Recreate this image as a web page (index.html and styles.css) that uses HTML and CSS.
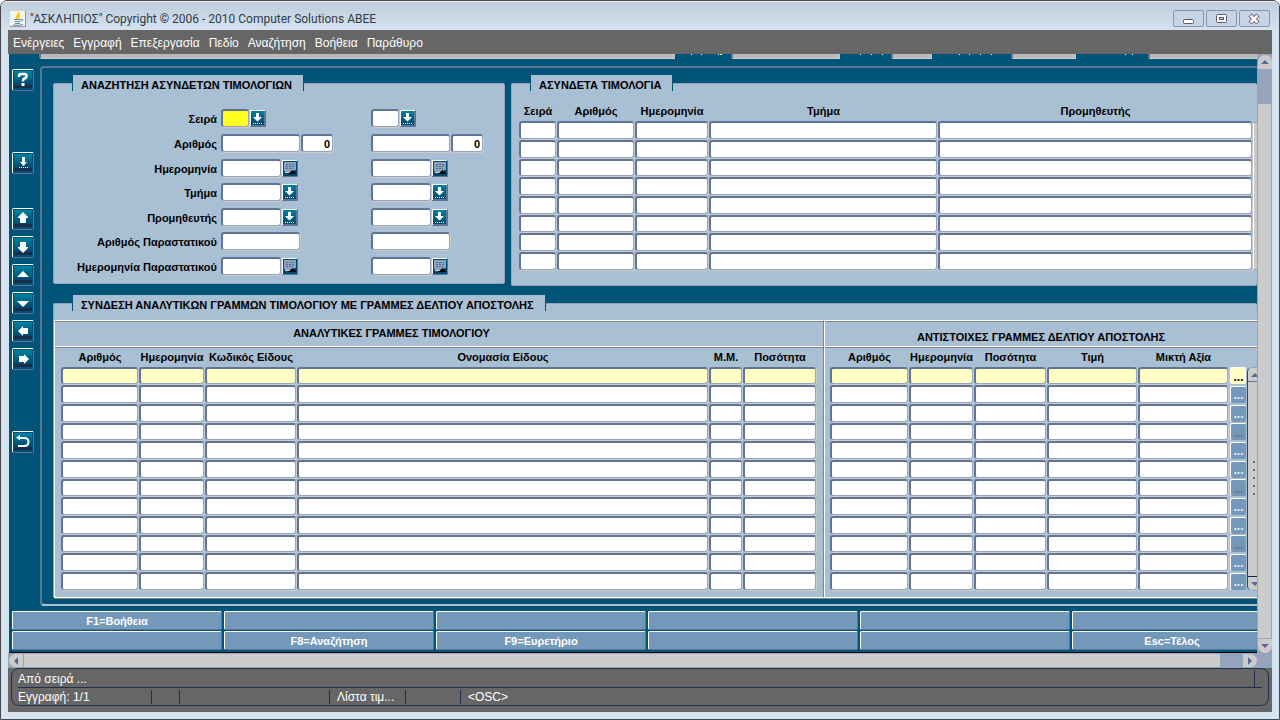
FILE: index.html
```html
<!DOCTYPE html>
<html lang="el">
<head>
<meta charset="utf-8">
<title>"ΑΣΚΛΗΠΙΟΣ"</title>
<link rel="stylesheet" href="styles.css">
</head>
<body>
<svg class="defs" aria-hidden="true">
  <defs>
    <linearGradient id="btn" x1="0" y1="0" x2="0" y2="1"><stop offset="0" stop-color="#0083a3"/><stop offset="1" stop-color="#00466b"/></linearGradient>
    <symbol id="tool" viewBox="0 0 22 22"><rect width="22" height="22" rx="2" fill="#607496"/><path d="M0 21V2Q0 0 2 0H21V1H1V21Z" fill="#fff"/><rect x="1" y="1" width="20" height="20" fill="#004f75"/><rect x="2" y="2" width="18" height="14" fill="url(#btn)"/><rect x="2" y="16" width="18" height="3" fill="#1b2c4a"/></symbol>
    <symbol id="lov" viewBox="0 0 16 17"><rect width="16" height="17" rx="1" fill="#607496"/><path d="M0 16V0H15V1H1V16Z" fill="#fff"/><rect x="1" y="1" width="13" height="14" fill="url(#btn)"/><path d="M6 3H9V7H12L7.500 11.500L3 7H6Z" fill="#fff"/><path d="M3 13.500H12" stroke="#fff" stroke-dasharray="1 1"/></symbol>
    <symbol id="cal" viewBox="0 0 16 17"><rect width="16" height="17" rx="1" fill="#607496"/><path d="M0 16V0H15V1H1V16Z" fill="#fff"/><rect x="1" y="1" width="14" height="15" fill="#004a70"/><path d="M2 2H14V10H12V12H3V11H2Z" fill="#8ba3bf"/><path d="M4 4.500H12M4 6.500H12M4 8.500H11" stroke="#526c92" stroke-dasharray="2 1"/><path d="M3 12.500H8" stroke="#cbd5df"/><path d="M6 14L10.500 10L14 13V14Z" fill="#000"/></symbol>
  </defs>
</svg>
<div class="window">
  <header class="titlebar">
    <svg class="java" viewBox="0 0 16 16"><path d="M0 0H16V16H0Z" fill="#8d99a8"/><path d="M0 0H15V15H0Z" fill="#f3f3f0"/><path d="M8 1Q10 3 7 5Q6 6 8 8M10 3Q8 5 9 7" fill="none" stroke="#f6c700" stroke-width="1.6"/><path d="M4 8.500H11M11 8.500Q14 8 12 10.500M4.500 10.500H10.500M5 12.500H10M3 14Q8 15 13 13.500" fill="none" stroke="#5f86a8"/></svg>
    <h1 class="title">"ΑΣΚΛΗΠΙΟΣ" Copyright © 2006 - 2010 Computer Solutions ΑΒΕΕ</h1>
    <button class="winbtn" aria-label="Ελαχιστοποίηση"><svg viewBox="0 0 16 12"><rect x="2.500" y="6.500" width="10" height="4" rx="1" fill="#fff" stroke="#62566c"/></svg></button>
    <button class="winbtn" aria-label="Μεγιστοποίηση"><svg viewBox="0 0 16 12"><rect x="2.500" y="1.500" width="10" height="8" rx="1" fill="#fff" stroke="#62566c"/><rect x="5.500" y="4.500" width="4" height="2" fill="#c5d2e2" stroke="#62566c"/></svg></button>
    <button class="winbtn" aria-label="Κλείσιμο"><svg viewBox="0 0 16 12"><path d="M3 2L11 10M11 2L3 10" stroke="#62566c" stroke-width="4.500"/><path d="M3.500 2.500L10.500 9.500M10.500 2.500L3.500 9.500" stroke="#fff" stroke-width="2.600"/></svg></button>
  </header>
  <nav class="menubar">
    <button>Ενέργειες</button><button>Εγγραφή</button><button>Επεξεργασία</button><button>Πεδίο</button><button>Αναζήτηση</button><button>Βοήθεια</button><button>Παράθυρο</button>
  </nav>
  <div class="viewport">
    <main class="canvas">
      <div class="topstrip">
        <span class="stub stub-a"></span><svg class="marks mark-a" viewBox="0 0 56 5"><path d="M16 .5h1M26 .5h1M43 .5h1M45 .5h2" stroke="#fff"/></svg>
        <span class="stub stub-b"></span><svg class="marks mark-b" viewBox="0 0 51 5"><path d="M20 .5h1M31 .5h1M42 .5h1" stroke="#fff"/></svg>
        <span class="stub stub-c"></span><svg class="marks mark-c" viewBox="0 0 79 5"><path d="M27 .5h1M37 .5h1M48 .5h1M59 .5h1" stroke="#fff"/></svg>
        <span class="stub stub-d"></span><svg class="marks mark-d" viewBox="0 0 72 5"><path d="M49 .5h1M56 .5h1" stroke="#fff"/></svg>
        <span class="stub stub-e"></span>
      </div>
      <div class="workspace">
        <aside class="toolbar">
          <button class="tool" aria-label="Βοήθεια"><svg viewBox="0 0 22 22"><use href="#tool"/><path d="M7 8V7Q7 5 9 5H12.500Q14.500 5 14.500 7Q14.500 9 12.500 9.500Q11 10 11 12.500" fill="none" stroke="#fff" stroke-width="2.500"/><path d="M9.500 14H12.500V17H9.500Z" fill="#fff"/></svg></button>
          <button class="tool gap-xl" aria-label="Λίστα τιμών"><svg viewBox="0 0 22 22"><use href="#tool"/><path d="M10 5H13V10H15L11.500 14L8 10H10Z" fill="#fff"/><path d="M7 15.500H16" stroke="#fff" stroke-dasharray="1 1"/></svg></button>
          <button class="tool gap-l" aria-label="Προηγούμενο μπλοκ"><svg viewBox="0 0 22 22"><use href="#tool"/><path d="M11 4L16 9V10H14V15H8V10H6V9Z" fill="#fff"/></svg></button>
          <button class="tool" aria-label="Επόμενο μπλοκ"><svg viewBox="0 0 22 22"><use href="#tool"/><path d="M8 6H14V11H16V12L11 17L6 12V11H8Z" fill="#fff"/></svg></button>
          <button class="tool" aria-label="Προηγούμενη εγγραφή"><svg viewBox="0 0 22 22"><use href="#tool"/><path d="M11 7L17 13H5Z" fill="#fff"/></svg></button>
          <button class="tool" aria-label="Επόμενη εγγραφή"><svg viewBox="0 0 22 22"><use href="#tool"/><path d="M5 9H17L11 15Z" fill="#fff"/></svg></button>
          <button class="tool" aria-label="Προηγούμενο πεδίο"><svg viewBox="0 0 22 22"><use href="#tool"/><path d="M6 11L11 6V8H16V14H11V16Z" fill="#fff"/></svg></button>
          <button class="tool" aria-label="Επόμενο πεδίο"><svg viewBox="0 0 22 22"><use href="#tool"/><path d="M17 11L12 6V8H7V14H12V16Z" fill="#fff"/></svg></button>
          <button class="tool gap-xxl" aria-label="Επιστροφή"><svg viewBox="0 0 22 22"><use href="#tool"/><path d="M4 6.500L8 4V9.500Z" fill="#fff"/><path d="M6 7H12Q16.500 7 16.500 11Q16.500 15 12 15H6" fill="none" stroke="#fff" stroke-width="2"/></svg></button>
        </aside>
        <div class="board">
          <div class="upper">
            <section class="panel search">
              <h2 class="tab">ΑΝΑΖΗΤΗΣΗ ΑΣΥΝΔΕΤΩΝ ΤΙΜΟΛΟΓΙΩΝ</h2>
              <form class="form" id="search-form"></form>
            </section>
            <section class="panel invoices">
              <h2 class="tab">ΑΣΥΝΔΕΤΑ ΤΙΜΟΛΟΓΙΑ</h2>
              <div class="invoice-body">
                <table class="data" id="invoices"></table>
                <div class="edge-scroll"></div>
              </div>
            </section>
          </div>
          <section class="panel linking">
            <h2 class="tab">ΣΥΝΔΕΣΗ ΑΝΑΛΥΤΙΚΩΝ ΓΡΑΜΜΩΝ ΤΙΜΟΛΟΓΙΟΥ ΜΕ ΓΡΑΜΜΕΣ ΔΕΛΤΙΟΥ ΑΠΟΣΤΟΛΗΣ</h2>
            <div class="split">
              <section class="half lines">
                <h3 class="heading heading-left">ΑΝΑΛΥΤΙΚΕΣ ΓΡΑΜΜΕΣ ΤΙΜΟΛΟΓΙΟΥ</h3>
                <table class="data tall" id="lines"></table>
              </section>
              <section class="half notes">
                <h3 class="heading heading-right">ΑΝΤΙΣΤΟΙΧΕΣ ΓΡΑΜΜΕΣ ΔΕΛΤΙΟΥ ΑΠΟΣΤΟΛΗΣ</h3>
                <div class="notes-body">
                  <table class="data tall" id="notes"></table>
                  <div class="inner-scroll"><span class="arrow up"></span><span class="grip"></span><span class="arrow down"></span></div>
                </div>
              </section>
            </div>
          </section>
        </div>
      </div>
      <div class="fkeys">
        <button>F1=Βοήθεια</button><button aria-label="F2"></button><button aria-label="F3"></button><button aria-label="F4"></button><button aria-label="F5"></button><button aria-label="F6"></button>
        <button aria-label="F7"></button><button>F8=Αναζήτηση</button><button>F9=Ευρετήριο</button><button aria-label="F10"></button><button aria-label="F11"></button><button>Esc=Τέλος</button>
      </div>
    </main>
    <div class="vscroll"><button class="arrow up" aria-label="Πάνω"></button><span class="trough"></span><span class="thumb"></span><button class="arrow down" aria-label="Κάτω"></button></div>
  </div>
  <div class="hscroll"><button class="harrow left" aria-label="Αριστερά"></button><span class="thumb"></span><span class="trough"></span><button class="harrow right" aria-label="Δεξιά"></button></div>
  <footer class="status">
    <div class="status-box">
      <div class="status-line first"><span class="message">Από σειρά ...</span></div>
      <div class="status-line second"><span class="cell c1">Εγγραφή: 1/1</span><span class="cell c2"></span><span class="cell c3"></span><span class="cell c4">Λίστα τιμ...</span><span class="cell c5"></span><span class="cell c6">&lt;OSC&gt;</span></div>
    </div>
  </footer>
</div>
<script src="app.js"></script>
</body>
</html>
```
FILE: styles.css
```css
* { box-sizing: border-box; }
body { margin: 0; background: #fff; font-family: "Liberation Sans", sans-serif; font-size: 11px; color: #000; }
button { font: inherit; color: inherit; border: 0; padding: 0; background: none; }
h1, h2, h3 { margin: 0; font-size: 11px; }
svg { display: block; }
.defs { position: absolute; width: 0; height: 0; }

.window { min-height: 100vh; display: flex; flex-direction: column; padding: 0 7px 7px; border: 1px solid #46464b; border-radius: 7px 7px 0 0; background: #d7e4f2; }
.titlebar { display: flex; align-items: center; gap: 2px; height: 29px; margin: 0 -7px; padding: 5px 9px 0 9px; border-top: 1px solid #eef3f8; border-radius: 6px 6px 0 0; background: linear-gradient(#bfcddb, #d5e2f0); }
.java { width: 16px; height: 16px; margin-right: 2px; }
.title { flex: 1; font: 12px Roboto, sans-serif; color: #303a48; white-space: nowrap; }
.winbtn { width: 31px; height: 17px; display: grid; place-items: center; border: 1px solid #8596ad; border-radius: 2px; background: #c6d4e4; }
.winbtn svg { width: 16px; height: 12px; }

.menubar { display: flex; gap: 9px; height: 24px; padding: 1px 5px 0; align-items: center; background: #666; color: #fff; font: 12px "Liberation Sans", sans-serif; }

.viewport { flex: 1; display: flex; border-left: 1px solid #d7e4f2; }
.canvas { flex: 1; min-width: 0; overflow: hidden; display: flex; flex-direction: column; background: #005478; border-bottom: 1px solid #000; }
.topstrip { flex: none; display: flex; height: 5px; padding-left: 30px; }
.stub { flex: none; height: 5px; background: #bababa; border: solid #ccc; border-width: 0 1px 1px 0; border-left: 2px solid #607496; border-bottom-left-radius: 2px; }
.stub-a { flex: 1; }
.stub-b { width: 109px; }
.stub-c { width: 41px; }
.stub-d { width: 65px; }
.stub-e { width: 109px; }
.marks { flex: none; height: 5px; }
.mark-a { width: 56px; }
.mark-b { width: 51px; }
.mark-c { width: 79px; }
.mark-d { width: 72px; }

.workspace { flex: 1; display: flex; padding-top: 7px; }
.toolbar { flex: none; width: 31px; padding: 3px 0 0 3px; display: flex; flex-direction: column; gap: 6px; }
.tool { width: 22px; height: 22px; }
.tool svg { width: 22px; height: 22px; }
.gap-l { margin-top: 28px; }
.gap-xl { margin-top: 55px; }
.gap-xxl { margin-top: 55px; }

.board { flex: 1; min-width: 0; padding: 15px 0 5px 11px; border: 2px solid #607496; border-right: 0; border-bottom: 2px solid #b4bccb; border-radius: 4px 0 0 4px; }
.upper { display: flex; gap: 6px; align-items: flex-start; }
.panel { position: relative; background: #a9bfd3; border: 1px solid #95a4bb; border-radius: 2px; }
.search { flex: none; width: 452px; height: 201px; }
.invoices { flex: 1; min-width: 0; height: 203px; border-right: 0; }
.tab { width: max-content; height: 16px; margin: -9px 0 0 18px; padding: 0 11px 0 8px; background: #a9bfd3; border: solid #005478; border-width: 0 1px; font-weight: bold; line-height: 20px; }
.linking { margin-top: 17px; border-right: 0; border-bottom: 0; }

.form { padding-top: 18px; font-weight: bold; }
.line { display: grid; grid-template-columns: 163px 146px 150px; column-gap: 4px; height: 25px; align-items: start; }
.line:nth-child(3), .line:nth-child(5) { height: 24px; }
.line label { text-align: right; line-height: 20px; white-space: nowrap; }
.group { display: flex; gap: 1px; }
.field { height: 18px; margin: 0; padding: 0 2px; border: solid #607496; border-width: 2px 1px 1px 2px; border-right-color: #95a4bb; border-bottom-color: #95a4bb; border-radius: 3px; outline: 0; box-shadow: 1px 1px 0 #ccc; background: #fff; font: bold 11px "Liberation Sans", sans-serif; text-align: right; }
.field.xs { width: 28px; }
.field.num { width: 32px; }
.field.md { width: 60px; }
.field.lg { width: 79px; }
.field.active { background: #ffff20; }
.pick { width: 16px; height: 17px; margin-top: 1px; }
.pick svg { width: 16px; height: 17px; }

.invoice-body { display: flex; padding: 10px 0 0 7px; }
.data { border-collapse: collapse; table-layout: fixed; width: 100%; }
.data th { height: 20px; padding: 1px 0 0; font-weight: bold; white-space: nowrap; line-height: 19px; overflow: visible; }
.data td { height: 19px; padding: 0 1px 1px 0; }
.data tr:nth-child(3n) td { height: 18px; }
.tall tr:nth-child(3n) td { height: 19px; }
.tall tr:nth-child(3n+1) td { height: 18px; }
.data td .field { display: block; width: 100%; height: 18px; }
.data tr:nth-child(3n) .field { height: 17px; }
.tall tr:nth-child(3n) .field { height: 18px; }
.tall tr:nth-child(3n+1) .field { height: 17px; }
.data tr.current .field { background: #ffffc6; }
.more { display: block; width: 16px; height: 17px; margin-left: 1px; padding-top: 2px; border: solid #fff; border-width: 1px 0 0 1px; border-radius: 2px; background: #7498ba; color: #e8edf3; font-size: 12px; font-weight: bold; line-height: 13px; }
tr:nth-child(3n+1) .more { color: #607496; }
.current:nth-child(3n+1) .more { background: #ffffc6; color: #000; }
.c38 { width: 38px; } .c78 { width: 78px; } .c74 { width: 74px; } .c229 { width: 229px; }
.c66 { width: 66px; } .c92 { width: 92px; } .c34 { width: 34px; } .c79 { width: 79px; }
.c65 { width: 65px; } .c73 { width: 73px; } .c91 { width: 91px; } .c18 { width: 18px; }
.edge-scroll { flex: none; width: 4px; height: 148px; margin-top: 21px; border: 1px solid #95a4bb; border-right: 0; border-left-color: #fff; border-radius: 4px 0 0 4px; background: #ccc; }

.split { display: flex; margin-top: 9px; border-left: 1px solid #fff; }
.half { border: solid #fff; border-width: 1px 0; box-shadow: inset 0 1px 0 #848484, 0 1px 0 #848484; padding: 1px 0 6px; }
.lines { flex: 1; min-width: 0; border-right: 1px solid #848484; }
.notes { flex: none; width: 433px; border-left: 1px solid #fff; }
.heading { height: 25px; border-bottom: 1px solid #fff; box-shadow: 0 1px 0 #848484; text-align: center; font-weight: bold; white-space: nowrap; }
.heading-left { padding-right: 95px; line-height: 22px; }
.heading-right { line-height: 30px; }
.lines .data { width: calc(100% - 12px); margin-left: 6px; }
.notes-body { display: flex; padding-left: 5px; }
.notes .data { flex: none; width: 417px; }
.inner-scroll { flex: none; width: 18px; height: 224px; margin-top: 20px; border: 1px solid #95a4bb; border-left: 1px solid #005478; border-radius: 5px; background: #ccc; display: flex; flex-direction: column; justify-content: space-between; align-items: flex-start; }
.grip { width: 9px; height: 42px; margin-left: 2px; background: radial-gradient(circle, #607496 1px, transparent 1px) 0 0 / 8px 8px; }

.arrow { flex: none; display: grid; place-items: center; width: 14px; height: 14px; background: #ccc; border-radius: 7px 7px 0 0; }
.arrow.down { border-radius: 0 0 7px 7px; }
.arrow::before { content: ""; border: 4px solid transparent; border-top-width: 0; border-bottom-color: #526c9a; }
.arrow.down::before { border-width: 4px 4px 0; border-color: #526c9a transparent transparent; }
.inner-scroll .up { border-bottom: 1px solid #607496; }
.inner-scroll .down { border-top: 1px solid #1b2c4a; }

.fkeys { flex: none; display: grid; grid-template-columns: repeat(5, 1fr) 200px; gap: 1px 2px; padding: 5px 0 2px 3px; margin-right: -15px; }
.fkeys button { height: 19px; background: #7498ba; border: 1px solid #607496; border-top-color: #fff; border-left-color: #fff; border-radius: 2px; color: #fff; font-weight: bold; }

.vscroll { flex: none; width: 15px; display: flex; flex-direction: column; background: #95a4bb; padding: 1px 1px 0; }
.vscroll .trough { height: 35px; }
.vscroll .thumb { flex: 1; background: #ccc; margin-bottom: 1px; }
.hscroll { flex: none; display: flex; height: 15px; padding: 1px 15px 1px 1px; background: #95a4bb; }
.hscroll .thumb { flex: 1; background: #ccc; margin-left: 1px; }
.hscroll .trough { width: 23px; }
.harrow { width: 14px; display: grid; place-items: center; background: #ccc; border-radius: 7px 0 0 7px; }
.harrow.right { border-radius: 0 7px 7px 0; }
.harrow::before { content: ""; border: 4px solid transparent; border-left-width: 0; border-right-color: #526c9a; }
.harrow.right::before { border-width: 4px 0 4px 4px; border-color: transparent transparent transparent #526c9a; }

.status { flex: none; height: 44px; padding: 0 3px; background: #666; color: #fff; font: 12px "Liberation Sans", sans-serif; }
.status-box { height: 38px; padding: 0 6px; border: 1px solid #20304c; border-radius: 8px; }
.status-line { display: flex; height: 18px; align-items: center; white-space: nowrap; }
.first { height: 19px; border-bottom: 1px solid #20304c; }
.message { flex: 1; height: 17px; line-height: 18px; border-right: 1px solid #20304c; margin-right: 7px; }
.cell { height: 14px; line-height: 14px; border-right: 1px solid #20304c; }
.c1 { width: 134px; } .c2 { width: 28px; } .c3 { width: 150px; }
.c4 { width: 76px; padding-left: 7px; } .c5 { width: 55px; } .c6 { border: 0; padding-left: 7px; }
```
FILE: app.js
```js
const icons = {
  lov: '<svg viewBox="0 0 16 17"><use href="#lov"/></svg>',
  cal: '<svg viewBox="0 0 16 17"><use href="#cal"/></svg>'
};

const searchRows = [
  ['Σειρά', 'xs', 'lov'],
  ['Αριθμός', 'lg', 'num'],
  ['Ημερομηνία', 'md', 'cal'],
  ['Τμήμα', 'md', 'lov'],
  ['Προμηθευτής', 'md', 'lov'],
  ['Αριθμός Παραστατικού', 'lg', ''],
  ['Ημερομηνία Παραστατικού', 'md', 'cal']
];

document.getElementById('search-form').innerHTML = searchRows.map(([label, size, extra], i) => {
  const group = (side) => {
    const active = i === 0 && side === 'from' ? ' active' : '';
    const name = side === 'from' ? '' : ` aria-label="${label} έως"`;
    let html = `<input class="field ${size}${active}" id="f${i}-${side}"${name}>`;
    if (extra === 'num') html += `<input class="field num" value="0" aria-label="${label}">`;
    else if (extra) html += `<button type="button" class="pick" aria-label="Επιλογή">${icons[extra]}</button>`;
    return `<div class="group">${html}</div>`;
  };
  return `<div class="line"><label for="f${i}-from">${label}</label>${group('from')}${group('to')}</div>`;
}).join('');

function buildTable(id, columns, rows, options = {}) {
  const cols = columns.map(([, cls]) => `<col class="${cls}">`).join('') + (options.more ? '<col class="c18">' : '');
  const head = columns.map(([name]) => `<th>${name}</th>`).join('') + (options.more ? '<th></th>' : '');
  let body = '';
  for (let r = 0; r < rows; r++) {
    const cells = columns.map(([name]) => `<td><input class="field" aria-label="${name}"></td>`).join('');
    const more = options.more ? '<td><button class="more">...</button></td>' : '';
    body += `<tr${options.current && r === 0 ? ' class="current"' : ''}>${cells}${more}</tr>`;
  }
  document.getElementById(id).innerHTML =
    `<colgroup>${cols}</colgroup><thead><tr>${head}</tr></thead><tbody>${body}</tbody>`;
}

buildTable('invoices', [
  ['Σειρά', 'c38'], ['Αριθμός', 'c78'], ['Ημερομηνία', 'c74'], ['Τμήμα', 'c229'], ['Προμηθευτής', '']
], 8);

buildTable('lines', [
  ['Αριθμός', 'c78'], ['Ημερομηνία', 'c66'], ['Κωδικός Είδους', 'c92'],
  ['Ονομασία Είδους', ''], ['Μ.Μ.', 'c34'], ['Ποσότητα', 'c74']
], 12, { current: true });

buildTable('notes', [
  ['Αριθμός', 'c79'], ['Ημερομηνία', 'c65'], ['Ποσότητα', 'c73'], ['Τιμή', 'c91'], ['Μικτή Αξία', '']
], 12, { current: true, more: true });
```
